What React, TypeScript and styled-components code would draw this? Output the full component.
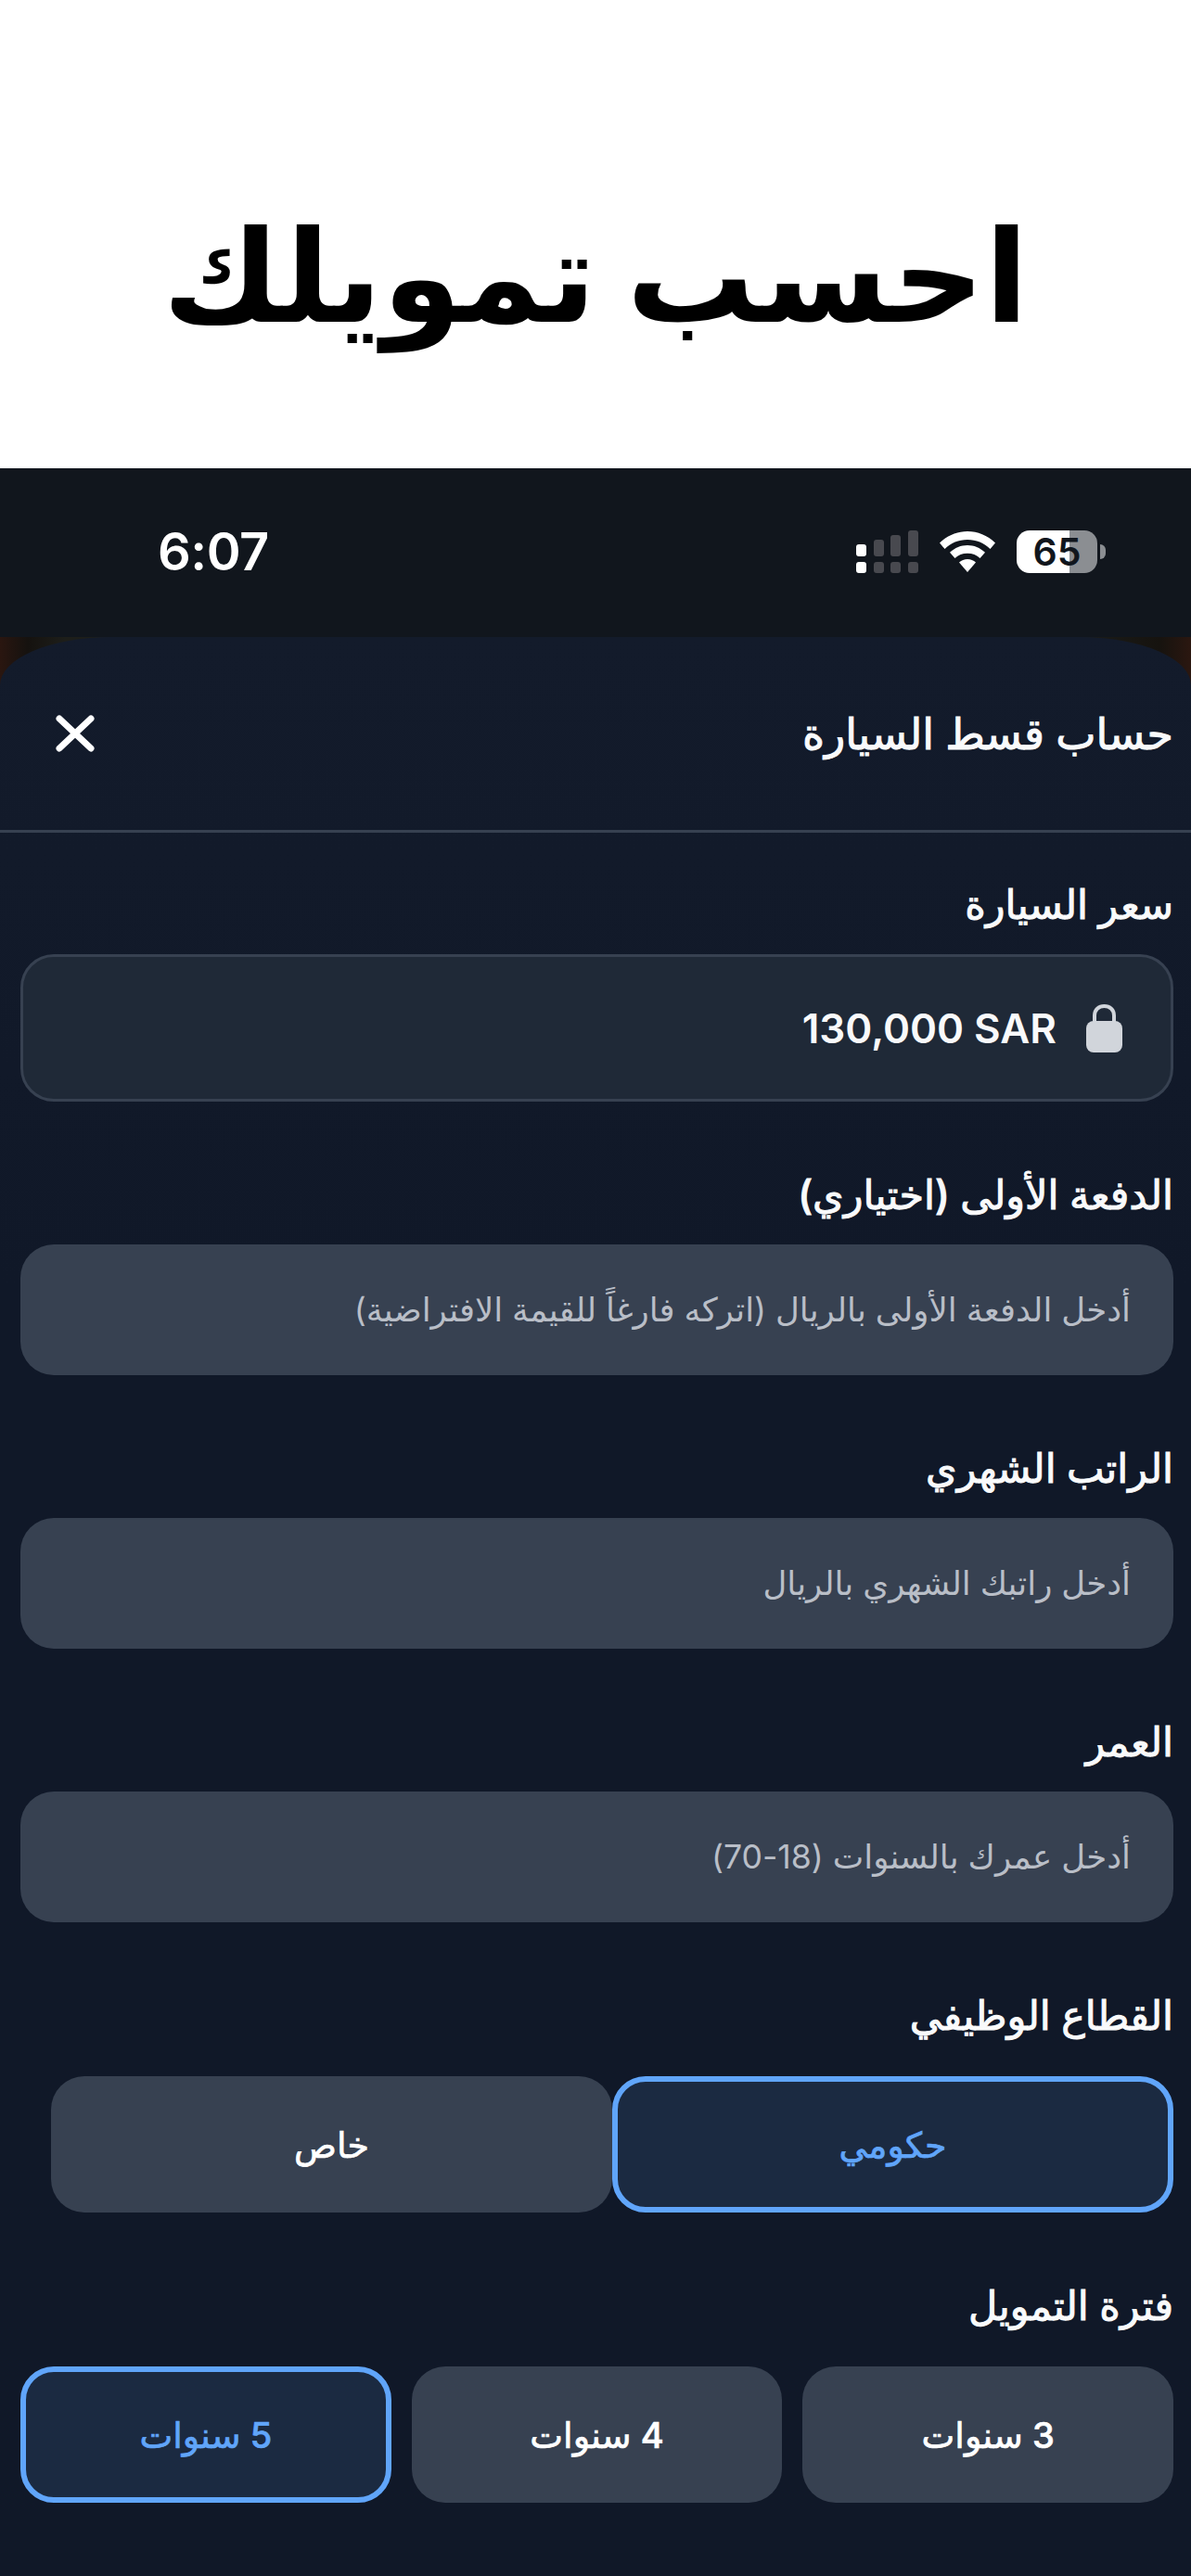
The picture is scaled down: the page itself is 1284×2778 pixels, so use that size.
import React from "react";
import styled, { createGlobalStyle } from "styled-components";

const arabicStack = `Inter, "DejaVu Sans", sans-serif`;

const GlobalStyle = createGlobalStyle`
	html, body {
		margin: 0;
		padding: 0;
		background: #111827;
	}
	* {
		box-sizing: border-box;
	}
`;

const Page = styled.div`
	width: 1284px;
	height: 2778px;
	overflow: hidden;
	display: flex;
	flex-direction: column;
	font-family: ${arabicStack};
`;

const Banner = styled.h1`
	margin: 0;
	height: 505px;
	flex: none;
	background: #fff;
	color: #000;
	display: flex;
	align-items: center;
	justify-content: center;
	padding-top: 88px;
	font-size: 138px;
	font-weight: 700;
`;

const StatusBar = styled.div`
	height: 182px;
	flex: none;
	background: #11161d;
	display: flex;
	align-items: center;
	justify-content: space-between;
	padding: 0 92px 2px 170px;
`;

const Time = styled.span`
	color: #fff;
	font-size: 56px;
	font-weight: 600;
	letter-spacing: -0.5px;
`;

const StatusIcons = styled.div`
	display: flex;
	align-items: center;
	gap: 23px;
`;

const Battery = styled.div`
	position: relative;
	width: 87px;
	height: 46px;
	border-radius: 14px;
	background: linear-gradient(90deg, #fff 0 57px, #8b8e92 57px);
	color: #11161d;
	font-size: 41px;
	font-weight: 600;
	display: flex;
	align-items: center;
	justify-content: center;
	margin-right: 9px;

	&::after {
		content: "";
		position: absolute;
		right: -9px;
		top: 15px;
		width: 6px;
		height: 16px;
		border-radius: 0 6px 6px 0;
		background: #8b8e92;
	}
`;

const Backdrop = styled.div`
	flex: 1;
	background: linear-gradient(90deg, #2a1610 0, #15120f 30px, #1d1e1a 70px, #1a1b18 1180px, #16130f 1250px, #2b1710 1284px);
`;

const Sheet = styled.div`
	height: 100%;
	background: linear-gradient(#131b2b, #101828 700px);
	border-radius: 120px 120px 0 0 / 52px 52px 0 0;
	direction: rtl;
`;

const SheetHeader = styled.header`
	height: 211px;
	border-bottom: 3px solid #374151;
	display: flex;
	align-items: center;
	justify-content: space-between;
	padding: 0 19px 0 60px;
`;

const SheetTitle = styled.h2`
	margin: 0;
	color: #f9fafb;
	font-size: 46px;
	font-weight: 500;
	-webkit-text-stroke: 1px #f9fafb;
`;

const CloseButton = styled.button`
	border: 0;
	padding: 0;
	background: none;
	color: #fff;
	display: flex;
`;

const Form = styled.div`
	padding: 47px 19px 0 22px;
	display: flex;
	flex-direction: column;
	gap: 70px;
`;

const Field = styled.section``;

const Label = styled.div`
	height: 60px;
	line-height: 60px;
	margin-bottom: 24px;
	color: #f9fafb;
	font-size: 43px;
	font-weight: 500;
	-webkit-text-stroke: 1px #f9fafb;
`;

const LockedInput = styled.div`
	height: 159px;
	border-radius: 36px;
	background: #1f2937;
	border: 3px solid #374151;
	display: flex;
	align-items: center;
	gap: 32px;
	padding: 0 52px 0 40px;
	color: #f9fafb;
	font-size: 44px;
	font-weight: 600;
`;

const Input = styled.div`
	height: 141px;
	border-radius: 36px;
	background: #374151;
	display: flex;
	align-items: center;
	padding: 0 46px;
	color: #b9bec7;
	font-size: 35.6px;
`;

const OptionRow = styled.div<{ $columns: number; $inset?: number }>`
	display: grid;
	grid-template-columns: repeat(${({ $columns }) => $columns}, 1fr);
	gap: ${({ $columns }) => ($columns === 3 ? "22px" : "0")};
	margin-top: 36px;
	padding-left: ${({ $inset }) => $inset ?? 0}px;
`;

const Option = styled.div<{ $active?: boolean }>`
	height: 147px;
	border-radius: 36px;
	background: ${({ $active }) => ($active ? "#1b2a41" : "#374151")};
	border: ${({ $active }) => ($active ? "6px solid #60a5fa" : "0")};
	color: ${({ $active }) => ($active ? "#60a5fa" : "#fff")};
	display: flex;
	align-items: center;
	justify-content: center;
	font-size: 38px;
	font-weight: 500;
	-webkit-text-stroke: 0.7px currentColor;
`;

const SignalIcon = () => (
	<svg width="67" height="46" viewBox="0 0 67 46" aria-hidden="true">
		<g fill="#fff">
			<rect x="0" y="15" width="11" height="13" rx="3" />
			<rect x="0" y="34" width="11" height="12" rx="3" />
		</g>
		<g fill="#48494f">
			<rect x="19" y="10" width="11" height="18" rx="3" />
			<rect x="37" y="5" width="11" height="23" rx="3" />
			<rect x="56" y="0" width="11" height="28" rx="3" />
			<rect x="19" y="34" width="11" height="12" rx="3" />
			<rect x="37" y="34" width="11" height="12" rx="3" />
			<rect x="56" y="34" width="11" height="12" rx="3" />
		</g>
	</svg>
);

const WifiIcon = () => (
	<svg width="60" height="44" viewBox="0 0 60 44" aria-hidden="true" fill="#fff">
		<path d="M30 0C19 0 8.500 4.300 0 12.500L5.500 19C12 12.500 20.500 9 30 9C39.500 9 48 12.500 54.500 19L60 12.500C51.500 4.300 41 0 30 0Z" />
		<path d="M30 15C23 15 16.500 17.700 11 22.800L16.500 29C20 25.700 24.700 23.800 30 23.800C35.300 23.800 40 25.700 43.500 29L49 22.800C43.500 17.700 37 15 30 15Z" />
		<path d="M30 30C26.500 30 23.500 31.200 21 33.500L30 44L39 33.500C36.500 31.200 33.500 30 30 30Z" />
	</svg>
);

const CloseIcon = () => (
	<svg width="42" height="40" viewBox="0 0 42 40" aria-hidden="true">
		<path d="M4 4L38 36M38 4L4 36" stroke="currentColor" strokeWidth="7" strokeLinecap="round" fill="none" />
	</svg>
);

const LockIcon = () => (
	<svg width="39" height="52" viewBox="0 0 39 52" aria-hidden="true">
		<path d="M9 20V12C9 6 13.500 2 19.500 2C25.500 2 30 6 30 12V20" stroke="#d1d5db" strokeWidth="4" fill="none" />
		<rect x="0" y="18" width="39" height="34" rx="8" fill="#d1d5db" />
	</svg>
);

const fields = [
	{ label: "الدفعة الأولى (اختياري)", placeholder: "أدخل الدفعة الأولى بالريال (اتركه فارغاً للقيمة الافتراضية)" },
	{ label: "الراتب الشهري", placeholder: "أدخل راتبك الشهري بالريال" },
	{ label: "العمر", placeholder: "أدخل عمرك بالسنوات (18-70)" },
];

const App = () => (
	<Page>
		<GlobalStyle />
		<Banner dir="rtl">احسب تمويلك</Banner>
		<StatusBar>
			<Time>6:07</Time>
			<StatusIcons>
				<SignalIcon />
				<WifiIcon />
				<Battery>65</Battery>
			</StatusIcons>
		</StatusBar>
		<Backdrop>
			<Sheet>
				<SheetHeader>
					<SheetTitle>حساب قسط السيارة</SheetTitle>
					<CloseButton>
						<CloseIcon />
					</CloseButton>
				</SheetHeader>
				<Form>
					<Field>
						<Label>سعر السيارة</Label>
						<LockedInput>
							<LockIcon />
							<bdi>130,000 SAR</bdi>
						</LockedInput>
					</Field>
					{fields.map((field) => (
						<Field key={field.label}>
							<Label>{field.label}</Label>
							<Input>{field.placeholder}</Input>
						</Field>
					))}
					<Field>
						<Label>القطاع الوظيفي</Label>
						<OptionRow $columns={2} $inset={33}>
							<Option $active>حكومي</Option>
							<Option>خاص</Option>
						</OptionRow>
					</Field>
					<Field>
						<Label>فترة التمويل</Label>
						<OptionRow $columns={3}>
							<Option>3 سنوات</Option>
							<Option>4 سنوات</Option>
							<Option $active>5 سنوات</Option>
						</OptionRow>
					</Field>
				</Form>
			</Sheet>
		</Backdrop>
	</Page>
);

export default App;
